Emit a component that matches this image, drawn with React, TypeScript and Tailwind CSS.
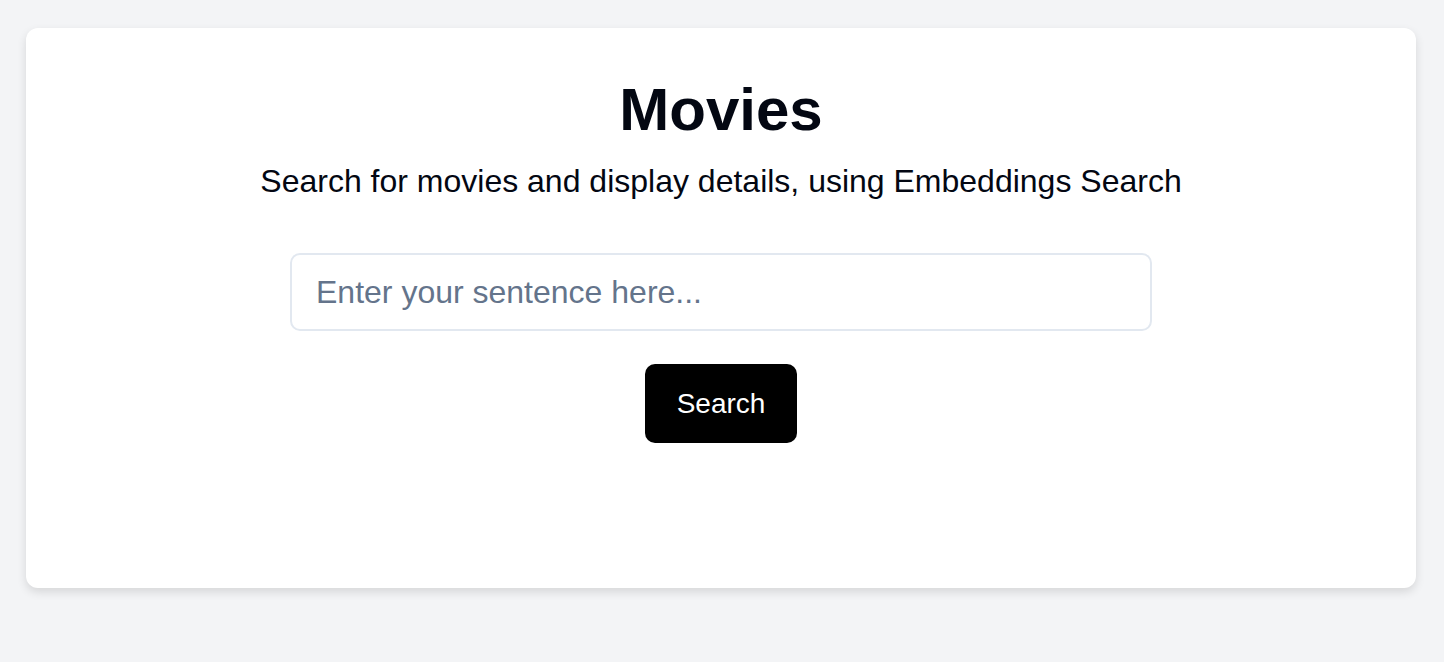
export default function App() {
  return (
    <div
      className="min-h-screen bg-[#f3f4f6] pl-[26px] pr-[28px] pt-[28px]"
      style={{ fontFamily: '"Liberation Sans", Arial, sans-serif' }}
    >
      {/* Card */}
      <div className="flex h-[560px] flex-col items-center rounded-xl bg-white pt-[52px] shadow-[0_4px_10px_rgba(0,0,0,0.12)]">
        <h1 className="text-[60px] font-bold leading-none text-[#030712]">Movies</h1>
        <p className="mt-[22px] text-[32px] leading-[38px] text-[#030712]">
          Search for movies and display details, using Embeddings Search
        </p>
        <input
          type="text"
          placeholder="Enter your sentence here..."
          className="mt-[53px] h-[78px] w-[862px] rounded-[10px] border-2 border-[#e2e8f0] px-[24px] text-[32px] text-[#030712] outline-none placeholder:text-[#64748b]"
        />
        <button className="mt-[33px] h-[79px] w-[152px] rounded-[10px] bg-black text-[28px] text-white">
          Search
        </button>
      </div>
    </div>
  );
}
